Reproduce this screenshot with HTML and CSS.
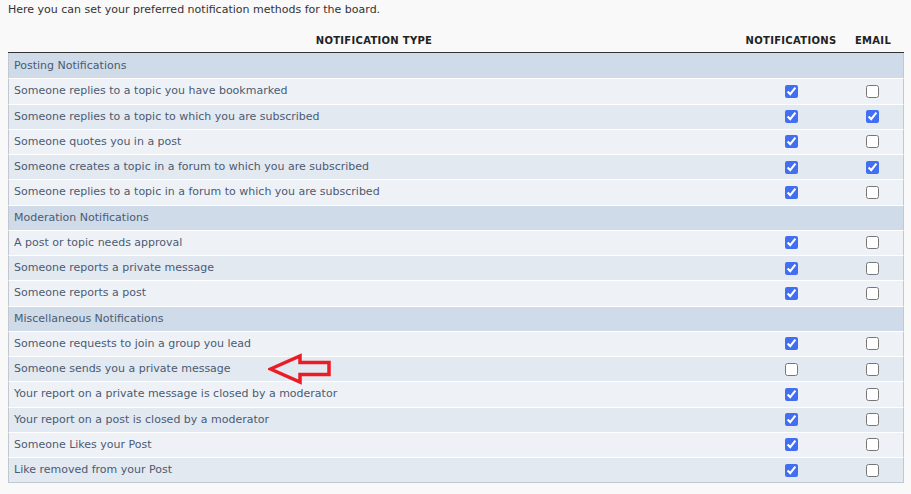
FILE: index.html
```html
<!DOCTYPE html>
<html lang="en">
<head>
    <meta charset="UTF-8">
    <title>Edit notification options</title>
    <link rel="stylesheet" href="styles.css">
</head>
<body>
<div class="panel">
    <p class="intro">Here you can set your preferred notification methods for the board.</p>

    <table class="notify-table">
        <thead>
            <tr>
                <th>Notification type</th>
                <th class="col-notify">Notifications</th>
                <th class="col-email">Email</th>
            </tr>
        </thead>
        <tbody>
            <tr class="section"><td colspan="3">Posting Notifications</td></tr>
            <tr class="bg1">
                <td>Someone replies to a topic you have bookmarked</td>
                <td class="mark"><input type="checkbox" checked></td>
                <td class="mark"><input type="checkbox"></td>
            </tr>
            <tr class="bg2">
                <td>Someone replies to a topic to which you are subscribed</td>
                <td class="mark"><input type="checkbox" checked></td>
                <td class="mark"><input type="checkbox" checked></td>
            </tr>
            <tr class="bg1">
                <td>Someone quotes you in a post</td>
                <td class="mark"><input type="checkbox" checked></td>
                <td class="mark"><input type="checkbox"></td>
            </tr>
            <tr class="bg2">
                <td>Someone creates a topic in a forum to which you are subscribed</td>
                <td class="mark"><input type="checkbox" checked></td>
                <td class="mark"><input type="checkbox" checked></td>
            </tr>
            <tr class="bg1">
                <td>Someone replies to a topic in a forum to which you are subscribed</td>
                <td class="mark"><input type="checkbox" checked></td>
                <td class="mark"><input type="checkbox"></td>
            </tr>

            <tr class="section"><td colspan="3">Moderation Notifications</td></tr>
            <tr class="bg1">
                <td>A post or topic needs approval</td>
                <td class="mark"><input type="checkbox" checked></td>
                <td class="mark"><input type="checkbox"></td>
            </tr>
            <tr class="bg2">
                <td>Someone reports a private message</td>
                <td class="mark"><input type="checkbox" checked></td>
                <td class="mark"><input type="checkbox"></td>
            </tr>
            <tr class="bg1">
                <td>Someone reports a post</td>
                <td class="mark"><input type="checkbox" checked></td>
                <td class="mark"><input type="checkbox"></td>
            </tr>

            <tr class="section"><td colspan="3">Miscellaneous Notifications</td></tr>
            <tr class="bg1">
                <td>Someone requests to join a group you lead</td>
                <td class="mark"><input type="checkbox" checked></td>
                <td class="mark"><input type="checkbox"></td>
            </tr>
            <tr class="bg2">
                <td>Someone sends you a private message</td>
                <td class="mark"><input type="checkbox"></td>
                <td class="mark"><input type="checkbox"></td>
            </tr>
            <tr class="bg1">
                <td>Your report on a private message is closed by a moderator</td>
                <td class="mark"><input type="checkbox" checked></td>
                <td class="mark"><input type="checkbox"></td>
            </tr>
            <tr class="bg2">
                <td>Your report on a post is closed by a moderator</td>
                <td class="mark"><input type="checkbox" checked></td>
                <td class="mark"><input type="checkbox"></td>
            </tr>
            <tr class="bg1">
                <td>Someone Likes your Post</td>
                <td class="mark"><input type="checkbox" checked></td>
                <td class="mark"><input type="checkbox"></td>
            </tr>
            <tr class="bg2">
                <td>Like removed from your Post</td>
                <td class="mark"><input type="checkbox" checked></td>
                <td class="mark"><input type="checkbox"></td>
            </tr>
        </tbody>
    </table>

    <!-- red arrow pointing at the private message row -->
    <svg class="pointer" width="64" height="32" viewBox="0 0 64 32">
        <polygon points="2.5,16 32,3 32,9.5 61,9.5 61,21.5 32,21.5 32,29" fill="none" stroke="#ea1c26" stroke-width="3.5" stroke-linejoin="miter"/>
    </svg>
</div>
</body>
</html>
```

FILE: styles.css
```css
body {
    margin: 0;
    background-color: #f9f9f9;
    font-family: "DejaVu Sans", Verdana, sans-serif;
    color: #333;
}
.panel {
    position: relative;
    padding: 2px 7px 0 8px;
}
.intro {
    margin: 0;
    font-size: 11px;
    line-height: 16px;
}
.notify-table {
    width: 896px;
    margin-top: 10px;
    border-collapse: separate;
    border-spacing: 0;
    font-size: 11px;
}
.notify-table th {
    padding: 6px 4px 5px;
    font-size: 10px;
    line-height: 13px;
    font-weight: bold;
    letter-spacing: 0.3px;
    text-transform: uppercase;
    color: #222;
    text-align: center;
    border-bottom: 1px solid #333;
}
.notify-table .col-notify {
    width: 94px;
}
.notify-table .col-email {
    width: 54px;
}
.notify-table td {
    padding: 4px 5px;
    line-height: 16.25px;
    color: #4c5a72;
    border-top: 1px solid #fff;
}
.notify-table tbody tr:first-child td {
    border-top: none;
    padding-top: 5px;
}
.notify-table td:first-child {
    border-left: 1px solid #c3c8d0;
}
.notify-table td:last-child {
    border-right: 1px solid #c3c8d0;
}
.notify-table tbody tr:last-child td {
    border-bottom: 1px solid #c3c8d0;
}
.section td {
    background-color: #cfdbe8;
}
.bg1 td {
    background-color: #eef2f7;
}
.bg2 td {
    background-color: #e2e9f1;
}
.mark {
    text-align: center;
}
.mark input {
    margin: 0;
    width: 13px;
    height: 13px;
    vertical-align: middle;
    accent-color: #426ef2;
}
.pointer {
    position: absolute;
    left: 268px;
    top: 353px;
}
```
